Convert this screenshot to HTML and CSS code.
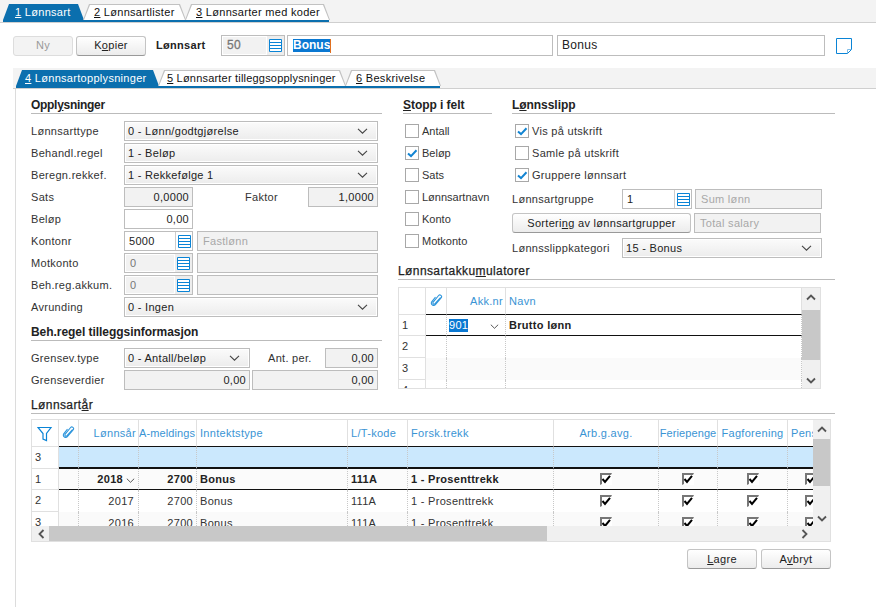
FILE: index.html
```html
<!DOCTYPE html>
<html lang="nb">
<head>
<meta charset="utf-8">
<title>Lønnsart</title>
<link rel="stylesheet" href="styles.css">
</head>
<body>
<svg class="defs" width="0" height="0" aria-hidden="true">
  <symbol id="list" viewBox="0 0 13 13"><path d="M.5.5h12v12H.5zM.5 3.5h12M.5 6.5h12M.5 9.5h12" fill="#fff" stroke="#0a84d6"/></symbol>
  <symbol id="chev" viewBox="0 0 11 6"><path d="M1 .8l4.5 4.4L10 .8" fill="none" stroke="#444" stroke-width="1.1"/></symbol>
  <symbol id="tick" viewBox="0 0 12 12"><path d="M2 6.500l3 2.600L10.500 3.200" fill="none" stroke="#1284d2" stroke-width="2"/></symbol>
  <symbol id="btick" viewBox="0 0 11 11"><path d="M1.500 5l2.500 3L9 1.800" fill="none" stroke="#000" stroke-width="2"/></symbol>
  <symbol id="clip" viewBox="0 0 13 14"><path d="M10.500 4.500L5 10.600c-1 1-2.600.2-2-1.200L8.600 2.500c1.300-1.400 3.900.2 2.700 2.200L5.600 11.500c-1.900 2.200-5.300.2-3.900-2.700L5.500 4" fill="none" stroke="#2f96dc" stroke-width="1.100"/></symbol>
  <symbol id="up" viewBox="0 0 10 7"><path d="M1 5.500l4-4 4 4" fill="none" stroke="#555" stroke-width="1.800"/></symbol>
  <symbol id="down" viewBox="0 0 10 7"><path d="M1 1.500l4 4 4-4" fill="none" stroke="#555" stroke-width="1.800"/></symbol>
  <symbol id="left" viewBox="0 0 7 10"><path d="M5.500 1l-4 4 4 4" fill="none" stroke="#555" stroke-width="1.800"/></symbol>
  <symbol id="right" viewBox="0 0 7 10"><path d="M1.500 1l4 4-4 4" fill="none" stroke="#555" stroke-width="1.800"/></symbol>
</svg>

<div class="topbar">
  <div class="tabs">
    <div class="tab active t1"><span><u>1</u> Lønnsart</span></div>
    <div class="tab t2"><span><u>2</u> Lønnsartlister</span></div>
    <div class="tab t3"><span><u>3</u> Lønnsarter med koder</span></div>
  </div>
</div>

<div class="headrow">
  <button class="btn ny" disabled>Ny</button>
  <button class="btn kopier">K<u>o</u>pier</button>
  <b class="headlabel">Lønnsart</b>
  <div class="lookup headlookup">
    <span class="value disabled">50</span>
    <span class="listbtn"><svg width="13" height="13"><use href="#list"/></svg></span>
  </div>
  <div class="input name1"><span class="sel">Bonus</span><i class="caret"></i></div>
  <div class="input name2">Bonus</div>
  <svg class="note" width="16" height="16" viewBox="0 0 16 16"><path d="M.5.5h15v11l-4 4H.5z" fill="#fff" stroke="#0a84d6"/><path d="M11.500 15v-3.500H15" fill="none" stroke="#7fbde8"/></svg>
</div>

<div class="subbar">
  <div class="tabs">
    <div class="tab active s1"><span><u>4</u> Lønnsartopplysninger</span></div>
    <div class="tab s2"><span><u>5</u> Lønnsarter tilleggsopplysninger</span></div>
    <div class="tab s3"><span><u>6</u> Beskrivelse</span></div>
  </div>
</div>

<main class="content">
  <div class="upper">
    <section class="leftcol">
      <h2 class="firsth">Oppl<u>y</u>sninger</h2>
      <div class="rows">
        <div class="row"><label>Lønnsarttype</label><div class="select grow"><span>0 - Lønn/godtgjørelse</span><svg width="11" height="6"><use href="#chev"/></svg></div></div>
        <div class="row"><label>Behandl.regel</label><div class="select grow"><span>1 - Beløp</span><svg width="11" height="6"><use href="#chev"/></svg></div></div>
        <div class="row"><label>Beregn.rekkef.</label><div class="select grow"><span>1 - Rekkefølge 1</span><svg width="11" height="6"><use href="#chev"/></svg></div></div>
        <div class="row"><label>Sats</label><div class="input num disabled w69">0,0000</div><span class="midlabel faktor">Faktor</span><div class="input num disabled w70">1,0000</div></div>
        <div class="row"><label>Beløp</label><div class="input num w69">0,00</div></div>
        <div class="row"><label>Kontonr</label><div class="lookup w69"><span class="value">5000</span><span class="listbtn plain"><svg width="13" height="13"><use href="#list"/></svg></span></div><div class="input disabled ghost grow gapl">Fastlønn</div></div>
        <div class="row"><label>Motkonto</label><div class="lookup w69"><span class="value disabled">0</span><span class="listbtn"><svg width="13" height="13"><use href="#list"/></svg></span></div><div class="input disabled grow gapl"></div></div>
        <div class="row"><label>Beh.reg.akkum.</label><div class="lookup w69"><span class="value disabled">0</span><span class="listbtn"><svg width="13" height="13"><use href="#list"/></svg></span></div><div class="input disabled grow gapl"></div></div>
        <div class="row"><label>Avrunding</label><div class="select grow"><span>0 - Ingen</span><svg width="11" height="6"><use href="#chev"/></svg></div></div>
      </div>
      <h2 class="second">Beh.re<u>g</u>el tilleggsinformasjon</h2>
      <div class="rows">
        <div class="row"><label>Grensev.type</label><div class="select w126"><span>0 - Antall/beløp</span><svg width="11" height="6"><use href="#chev"/></svg></div><span class="midlabel antper">Ant. per.</span><div class="input num disabled w53">0,00</div></div>
        <div class="row"><label>Grenseverdier</label><div class="input num disabled w126">0,00</div><div class="input num disabled w126 gap2">0,00</div></div>
      </div>
    </section>

    <div class="rightcol">
      <div class="righttop">
        <section class="stopcol">
          <h2><u>S</u>topp i felt</h2>
          <div class="rows checks">
            <div class="check"><i class="box"></i>Antall</div>
            <div class="check"><i class="box"><svg width="12" height="12"><use href="#tick"/></svg></i>Beløp</div>
            <div class="check"><i class="box"></i>Sats</div>
            <div class="check"><i class="box"></i>Lønnsartnavn</div>
            <div class="check"><i class="box"></i>Konto</div>
            <div class="check"><i class="box"></i>Motkonto</div>
          </div>
        </section>
        <section class="slipcol">
          <h2>L<u>ø</u>nnsslipp</h2>
          <div class="rows checks indent">
            <div class="check"><i class="box"><svg width="12" height="12"><use href="#tick"/></svg></i>Vis på utskrift</div>
            <div class="check"><i class="box"></i>Samle på utskrift</div>
            <div class="check"><i class="box"><svg width="12" height="12"><use href="#tick"/></svg></i>Gruppere lønnsart</div>
          </div>
          <div class="slipform">
            <div class="row"><label class="wide">Lønnsartgruppe</label><div class="lookup w70"><span class="value">1</span><span class="listbtn plain"><svg width="13" height="13"><use href="#list"/></svg></span></div><div class="input disabled ghost w127 gapl3">Sum lønn</div></div>
            <div class="row"><button class="btn sort">Sorteri<u>n</u>g av lønnsartgrupper</button><div class="input disabled ghost w127 gapl3b">Total salary</div></div>
            <div class="row"><label class="wide">Lønnsslippkategori</label><div class="select w200"><span>15 - Bonus</span><svg width="11" height="6"><use href="#chev"/></svg></div></div>
          </div>
        </section>
      </div>
      <section class="akkum">
        <h2 class="plainh">Lønnsartakku<u>m</u>ulatorer</h2>
        <div class="grid grid1">
          <div class="viewport">
            <table class="tb1">
              <colgroup><col class="c27"><col class="c21"><col class="c59"><col class="c296"></colgroup>
              <thead><tr><th class="corner"></th><th class="ico"><svg width="13" height="14"><use href="#clip"/></svg></th><th class="r">Akk.nr</th><th>Navn</th></tr></thead>
              <tbody>
                <tr class="cur tall"><th class="rh">1</th><td></td><td class="akkcell"><span class="sel">901</span><svg width="9" height="5"><use href="#chev"/></svg></td><td>Brutto lønn</td></tr>
                <tr><th class="rh">2</th><td></td><td></td><td></td></tr>
                <tr class="odd"><th class="rh">3</th><td></td><td></td><td></td></tr>
                <tr><th class="rh">4</th><td></td><td></td><td></td></tr>
              </tbody>
            </table>
          </div>
          <div class="vbar v1"><svg width="10" height="7"><use href="#up"/></svg><i class="vthumb"></i><svg width="10" height="7"><use href="#down"/></svg></div>
        </div>
      </section>
    </div>
  </div>

  <section class="years">
    <h2 class="plainh">Lønnsart<u>å</u>r</h2>
    <div class="grid grid2">
      <div class="viewport">
        <table class="tb2">
          <colgroup><col class="c27"><col class="c20"><col class="c60"><col class="c58"><col class="c151"><col class="c60"><col class="c146"><col class="c105"><col class="c59"><col class="c70"><col class="c62"></colgroup>
          <thead>
            <tr>
              <th class="corner"><svg class="funnel" width="16" height="16" viewBox="0 0 16 16"><path d="M1 1.500h13L9.500 7.500v7l-3.500-1.500V7.500z" fill="none" stroke="#0a84d6" stroke-width="1.200"/></svg></th>
              <th class="ico"><svg width="13" height="14"><use href="#clip"/></svg></th>
              <th class="r">Lønnsår</th><th class="r fit">A-meldings</th><th>Inntektstype</th><th>L/T-kode</th><th>Forsk.trekk</th><th class="c">Arb.g.avg.</th><th class="c tight">Feriepenge</th><th class="c">Fagforening</th><th>Pensjon</th>
            </tr>
          </thead>
          <tbody>
            <tr class="new"><th class="rh">3</th><td></td><td></td><td></td><td></td><td></td><td></td><td></td><td></td><td></td><td></td></tr>
            <tr class="cur bold"><th class="rh">1</th><td></td><td class="r yearcell">2018<svg width="9" height="5"><use href="#chev"/></svg></td><td class="r">2700</td><td>Bonus</td><td>111A</td><td>1 - Prosenttrekk</td><td class="c"><i class="gc"><svg width="11" height="11"><use href="#btick"/></svg></i></td><td class="c"><i class="gc"><svg width="11" height="11"><use href="#btick"/></svg></i></td><td class="c"><i class="gc"><svg width="11" height="11"><use href="#btick"/></svg></i></td><td class="cl"><i class="gc"><svg width="11" height="11"><use href="#btick"/></svg></i></td></tr>
            <tr><th class="rh">2</th><td></td><td class="r pad">2017</td><td class="r">2700</td><td>Bonus</td><td>111A</td><td>1 - Prosenttrekk</td><td class="c"><i class="gc"><svg width="11" height="11"><use href="#btick"/></svg></i></td><td class="c"><i class="gc"><svg width="11" height="11"><use href="#btick"/></svg></i></td><td class="c"><i class="gc"><svg width="11" height="11"><use href="#btick"/></svg></i></td><td class="cl"><i class="gc"><svg width="11" height="11"><use href="#btick"/></svg></i></td></tr>
            <tr class="odd"><th class="rh">3</th><td></td><td class="r pad">2016</td><td class="r">2700</td><td>Bonus</td><td>111A</td><td>1 - Prosenttrekk</td><td class="c"><i class="gc"><svg width="11" height="11"><use href="#btick"/></svg></i></td><td class="c"><i class="gc"><svg width="11" height="11"><use href="#btick"/></svg></i></td><td class="c"><i class="gc"><svg width="11" height="11"><use href="#btick"/></svg></i></td><td class="cl"><i class="gc"><svg width="11" height="11"><use href="#btick"/></svg></i></td></tr>
          </tbody>
        </table>
      </div>
      <div class="vbar v2"><svg width="10" height="7"><use href="#up"/></svg><i class="vthumb"></i><svg width="10" height="7"><use href="#down"/></svg></div>
      <div class="hbar"><svg width="7" height="10"><use href="#left"/></svg><i class="hthumb"></i><svg width="7" height="10"><use href="#right"/></svg></div>
      <div class="hcorner"></div>
    </div>
  </section>

  <div class="actions">
    <button class="btn act"><u>L</u>agre</button>
    <button class="btn act">A<u>v</u>bryt</button>
  </div>
</main>
</body>
</html>
```
FILE: styles.css
```css
* { box-sizing: border-box; }
html, body { margin: 0; padding: 0; }
body {
  width: 876px; height: 607px; overflow: hidden; background: #fff;
  font: 11px/1 "Liberation Sans", Arial, sans-serif; letter-spacing: .3px; color: #222;
}
.defs { position: absolute; }
u { text-decoration: underline; text-underline-offset: 1px; }

/* tab strips */
.topbar { height: 23px; padding: 4px 0 0 3px; background: #f3f3f3; border-bottom: 1px solid #cfcfcf; }
.subbar { height: 21px; margin-left: 13px; padding: 2px 0 0 3px; background: #f3f3f3; border-bottom: 1px solid #cfcfcf; }
.tabs { display: flex; width: max-content; border-bottom: 2px solid #0b6fae; }
.tab { position: relative; height: 16px; background: #c2c2c2; --sl: 6px; }
.tab::before { content: ""; position: absolute; inset: 1px 1px 0 1px; background: #fff; clip-path: polygon(var(--sl) 0, calc(100% - var(--sl)) 0, 100% 100%, 0 100%); }
.tab { clip-path: polygon(var(--sl) 0, calc(100% - var(--sl)) 0, 100% 100%, 0 100%); margin-right: -1px; }
.tab span { position: relative; display: block; line-height: 17px; white-space: nowrap; color: #111; }
.tab.active { background: #0b6fae; }
.tab.active::before { display: none; }
.tab.active span { color: #fff; }
.t1 { width: 81px; } .t1 span { padding-left: 12px; }
.t2 { width: 103px; } .t2 span { padding-left: 11px; }
.t3 { width: 145px; } .t3 span { padding-left: 11px; }
.s1 { width: 143px; } .s1 span { padding-left: 9px; }
.s2 { width: 188px; } .s2 span { padding-left: 9px; letter-spacing: .2px; }
.s3 { width: 96px; } .s3 span { padding-left: 11px; }

/* head row */
.headrow { display: flex; align-items: center; height: 45px; padding-left: 13px; }
.btn {
  height: 20px; padding: 0; font: inherit; letter-spacing: inherit; color: #222;
  border: 1px solid #c4c4c4; border-bottom-color: #999; border-radius: 3px;
  background: linear-gradient(#fff, #ececec); white-space: nowrap;
}
.btn.ny { width: 60px; color: #9a9a9a; border-color: #ddd; background: #f3f3f3; }
.btn.kopier { width: 70px; margin-left: 3px; }
.headlabel { width: 65px; margin-left: 10px; color: #222; }
.input, .value {
  display: block; height: 20px; line-height: 18px; padding: 0 3px; border: 1px solid #bdbdbd; background: #fff; white-space: nowrap; overflow: hidden;
}
.input.disabled { background: #f2f2f2; }
.input.ghost { color: #a8a8a8; padding-left: 5px; }
.num { text-align: right; }
.sel { background: #0a78d2; color: #fff; }
.name1 { width: 266px; height: 21px; margin-left: 2px; padding-left: 5px; font-size: 12px; letter-spacing: 0; line-height: 19px; font-weight: bold; display: flex; align-items: center; }
.name1 .sel { line-height: 13px; }
.caret { display: block; width: 1px; height: 14px; background: #e07020; }
.name2 { width: 268px; height: 21px; margin-left: 4px; padding-left: 4px; font-size: 12px; line-height: 19px; }
.note { margin-left: 11px; }

.lookup { display: flex; height: 20px; border: 1px solid #bdbdbd; background: #fff; }
.lookup .value { flex: 1; min-width: 0; height: 18px; border: 0; line-height: 18px; padding: 0 4px; }
.lookup .value.disabled { background: #f2f2f2; color: #777; border: 1px solid #fff; line-height: 16px; }
.listbtn { display: flex; align-items: center; justify-content: center; width: 17px; background: #ededed; }
.listbtn.plain { background: #fff; border-left: 1px solid #ccc; }
.listbtn svg { display: block; }
.headlookup { width: 64px; height: 21px; }
.headlookup .value { height: 19px; font-size: 12px; -webkit-text-stroke: .3px #777; line-height: 17px; }

/* content */
.content { margin-left: 15px; height: 518px; padding: 9px 0 0 15px; border-left: 1px solid #dcdcdc; }
h2 { margin: 0; height: 16px; font-size: 12px; font-weight: bold; line-height: 14px; color: #222; border-bottom: 1px solid #bbb; letter-spacing: -.05px; }
h2.firsth { letter-spacing: -.3px; }
h2.plainh { font-weight: normal; -webkit-text-stroke: .25px #222; letter-spacing: .4px; }
.upper { display: flex; }
.leftcol { width: 351px; }
.rows { display: flex; flex-direction: column; gap: 2px; margin-top: 7px; width: 347px; }
.row { display: flex; align-items: center; height: 20px; }
.row label { width: 93px; flex: none; color: #333; white-space: nowrap; }
.grow { flex: 1; min-width: 0; }
.w53 { width: 53px; } .w69 { width: 69px; flex: none; } .w70 { width: 70px; flex: none; } .w126 { width: 126px; flex: none; } .w127 { width: 127px; flex: none; } .w200 { width: 200px; flex: none; }
.gapl { margin-left: 4px; } .gap2 { margin-left: 2px; } .gapl3 { margin-left: 3px; } .gapl3b { margin-left: 3px; }
.midlabel { color: #333; white-space: nowrap; }
.faktor { width: 115px; padding-left: 52px; flex: none; }
.antper { width: 75px; padding-left: 18px; flex: none; }
.select {
  display: flex; align-items: center; justify-content: space-between; height: 20px; padding: 0 9px 0 3px; white-space: nowrap;
  border: 1px solid #bdbdbd; background: linear-gradient(#fbfbfb, #ececec); box-shadow: inset 0 0 0 1px #fff;
}
.select svg { flex: none; }
.second { margin-top: 8px; width: 351px; }

.rightcol { margin-left: 21px; width: 432px; }
.righttop { display: flex; height: 158px; }
.stopcol { width: 89px; }
.stopcol .rows { width: auto; }
.slipcol { margin-left: 20px; width: 323px; }
.slipcol .rows { width: auto; }
.check { display: flex; align-items: center; height: 20px; color: #333; white-space: nowrap; }
.stopcol .check { letter-spacing: 0; }
.box { display: flex; align-items: center; justify-content: center; width: 14px; height: 14px; margin: 0 3px 0 2px; border: 1px solid #a8a8a8; background: #fff; flex: none; }
.indent .box { margin: 0 3px 0 3px; }
.slipform { display: flex; flex-direction: column; margin-top: 4px; }
.slipform .row + .row { margin-top: 4px; }
.slipform .row:last-child { margin-top: 5px; }
.row label.wide { width: 110px; }
.btn.sort { width: 179px; height: 20px; }
.akkum { margin: 8px 0 0 -5px; width: 437px; }
.akkum h2 { width: 437px; }

/* grids */
.grid { display: grid; border: 1px solid #e0e0e0; background: #fff; margin-top: 7px; }
.grid1 { width: 423px; height: 102px; grid-template-columns: 403px 18px; }
.grid2 { width: 800px; height: 123px; margin-top: 5px; grid-template-columns: 781px 17px; grid-template-rows: 106px 15px; }
.viewport { overflow: hidden; min-width: 0; }
table { border-collapse: separate; border-spacing: 0; table-layout: fixed; }
.tb1 { width: 403px; }
.tb2 { width: 818px; }
.c20{width:20px}.c21{width:21px}.c27{width:27px}.c58{width:58px}.c59{width:59px}.c60{width:60px}.c62{width:62px}.c70{width:70px}.c105{width:105px}.c146{width:146px}.c151{width:151px}.c296{width:296px}
thead th { height: 27px; padding: 0 3px; font-weight: normal; text-align: left; color: #3a94d4; border-right: 1px solid #e0e0e0; border-bottom: 1px solid #111; white-space: nowrap; overflow: hidden; }
thead th.r { text-align: right; padding-right: 2px; }
thead th.r.fit { padding: 0 1px 0 0; letter-spacing: .1px; }
thead th.c { text-align: center; }
thead th.tight { padding: 0; letter-spacing: .1px; }
thead th.corner { border-bottom-color: #e0e0e0; padding: 0; text-align: center; }
thead th.ico { padding: 0; text-align: center; }
.funnel { display: block; margin: 1px auto 0; }
tbody td, tbody th { height: 22px; padding: 0 3px; border-right: 1px dotted #c8c8c8; white-space: nowrap; overflow: hidden; color: #333; }
tbody th.rh { text-align: left; font-weight: normal; background: #fff; border-right: 1px solid #e0e0e0; border-bottom: 1px solid #e0e0e0; padding-left: 3px; color: #333; }
tbody .odd td { background: #fafafa; }
tbody .cur td, tbody .cur th { height: 21px; }
tbody .cur td { border-bottom: 1px solid #111; background: #fff; font-weight: bold; color: #222; }
tbody .bold td { background: #fbfbfb; }
tbody .new td { background: #cbe8fd; border-bottom: 2px solid #111; }
tbody .new th.rh { border-bottom-color: #e0e0e0; }
td.r { text-align: right; }
td.c { text-align: center; }
td.cl { padding-left: 17px; }
td.pad { padding-right: 4px; }
.akkcell { position: relative; padding-left: 2px; }
.akkcell svg { position: absolute; right: 6px; top: 9px; }
.akkcell .sel { font-weight: normal; display: inline-block; padding: 1px 0; }
.yearcell svg { margin-left: 3px; }
.gc { display: inline-block; width: 12px; height: 12px; vertical-align: middle; border: 1px solid #fff; border-top: 2px solid #777; border-left: 2px solid #777; background: #fff; line-height: 0; }
.gc svg { margin: -1px 0 0 -1px; }
.vbar { display: flex; flex-direction: column; align-items: center; justify-content: space-between; padding: 6px 0 4px; background: #f0f0f0; overflow: hidden; }
.vthumb { display: block; width: 100%; flex: none; background: #c8c8c8; }
.v1 .vthumb { height: 50px; margin-top: 6px; margin-bottom: 14px; }
.v2 .vthumb { height: 47px; margin-top: 2px; margin-bottom: 25px; }
.hbar { display: flex; align-items: center; background: #f0f0f0; padding: 0 5px 0 6px; }
.hthumb { display: block; width: 498px; height: 100%; margin-left: 4px; margin-right: auto; background: #c8c8c8; }
.hcorner { background: #f0f0f0; }
.years { margin-top: 8px; width: 804px; }
.actions { display: flex; justify-content: flex-end; gap: 4px; width: 800px; margin-top: 7px; }
.btn.act { width: 70px; }
```
